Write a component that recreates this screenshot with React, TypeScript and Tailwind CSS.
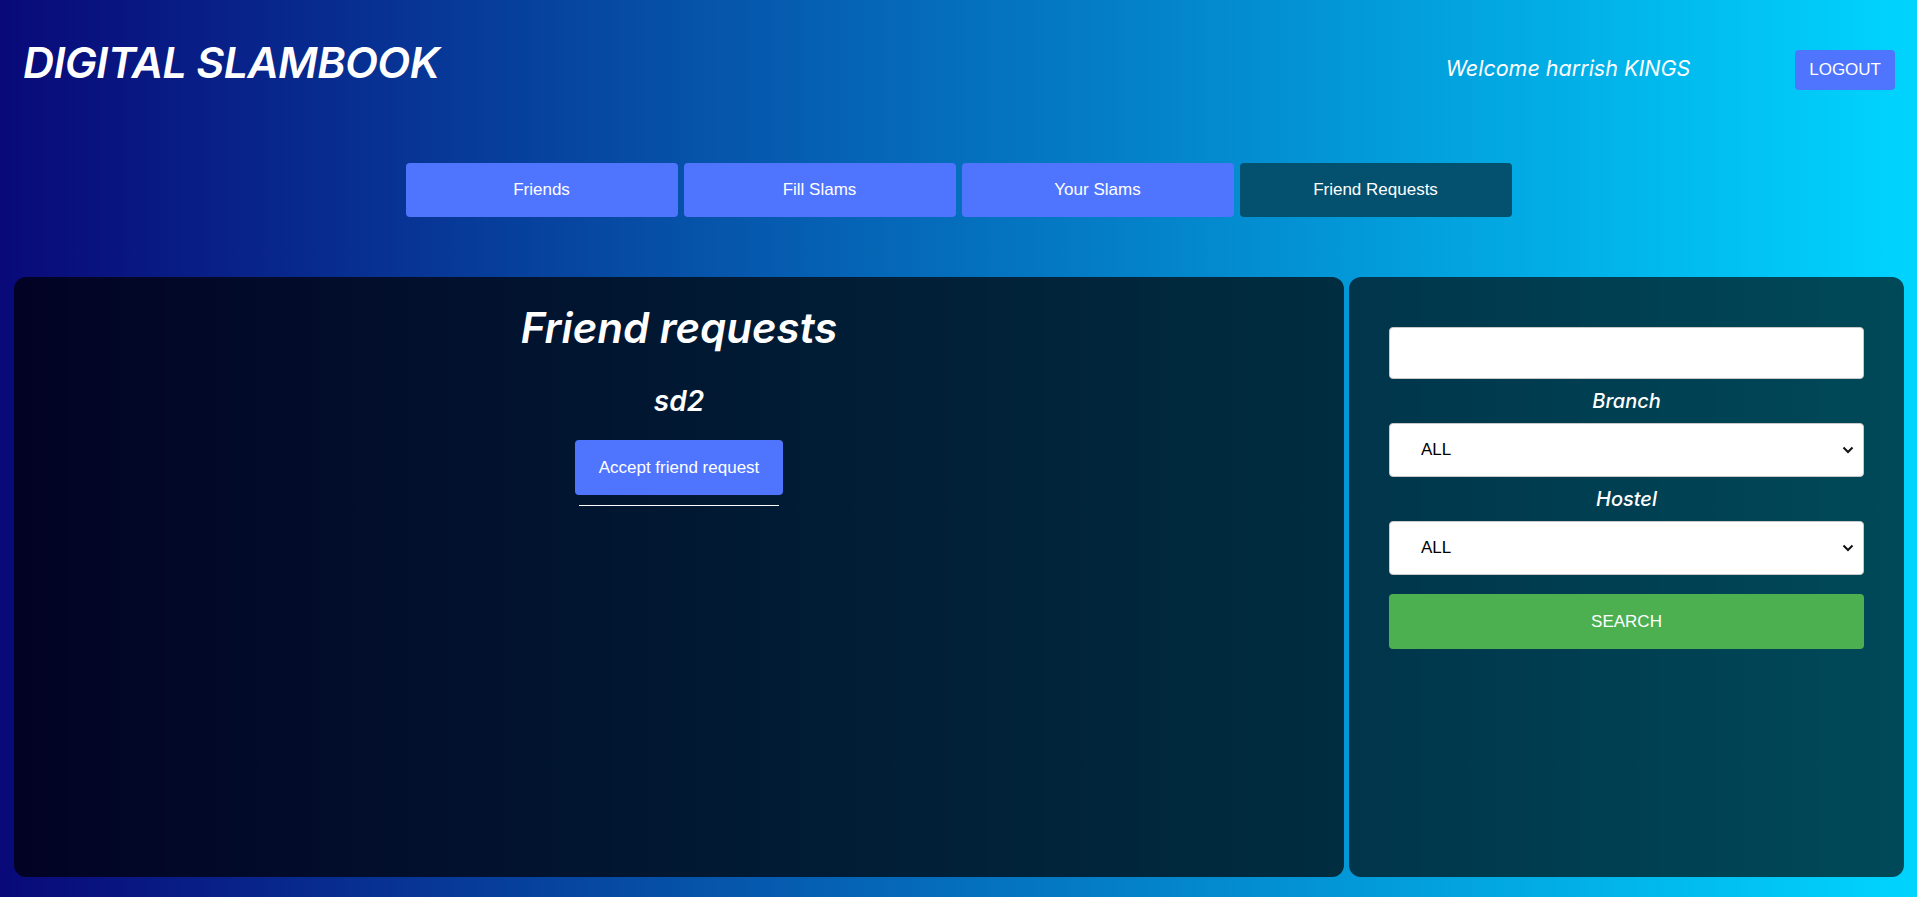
import React from "react";

const mont = "font-['Inter','Open_Sans',sans-serif]";

function Chevron() {
  return (
    <svg width="12" height="8" viewBox="0 0 12 8" className="pointer-events-none absolute right-[10px] top-1/2 -translate-y-1/2">
      <path d="M1.5 1.5 L6 6 L10.5 1.5" fill="none" stroke="#111" strokeWidth="2" />
    </svg>
  );
}

function Select() {
  return (
    <div className="relative w-full">
      <select className="h-[54px] w-full appearance-none rounded-[4px] border border-[#c8c8c8] bg-white pl-[31px] text-[17px] text-black outline-none">
        <option>ALL</option>
      </select>
      <Chevron />
    </div>
  );
}

export default function App() {
  const tabs = ["Friends", "Fill Slams", "Your Slams", "Friend Requests"];
  return (
    <div className="min-h-[897px] w-full bg-[linear-gradient(90deg,#090979_0%,#00d4ff_100%)] font-['Liberation_Sans',Arial,sans-serif] text-white">
      <header className="flex h-[124px] items-center justify-between pl-[23px] pr-[22px]">
        <h1 className={`${mont} text-[43px] font-semibold italic leading-none tracking-[-0.6px] text-white`}>
          DIGITAL SLAMBOOK
        </h1>
        <div className="flex items-center">
          <span className={`${mont} mt-[12px] text-[21.5px] italic text-white`}>Welcome harrish KINGS</span>
          <button className="ml-[105px] mt-[15px] h-[40px] rounded-[4px] bg-[#4f75ff] px-[14px] text-[17px] text-white">
            LOGOUT
          </button>
        </div>
      </header>

      <nav className="mt-[39px] flex justify-center gap-[6px]">
        {tabs.map((t, i) => (
          <button
            key={t}
            className={`h-[54px] w-[272px] rounded-[4px] text-[17px] text-white ${
              i === 3 ? "bg-[#03506f]" : "bg-[#4f75ff]"
            }`}
          >
            {t}
          </button>
        ))}
      </nav>

      <main className="mt-[60px] flex h-[600px] gap-[5px] pl-[14px] pr-[13px]">
        <section className="flex w-[1330px] flex-col items-center rounded-[12px] bg-black/70 pt-[26px]">
          <h2 className={`${mont} text-[42px] font-semibold italic leading-[50px] text-white`}>Friend requests</h2>
          <h3 className={`${mont} mt-[31px] text-[28px] font-semibold italic leading-[34px] text-white`}>sd2</h3>
          <button className="mt-[22px] h-[55px] w-[208px] rounded-[4px] bg-[#4f75ff] text-[17px] text-white">
            Accept friend request
          </button>
          <div className="mt-[10px] h-px w-[200px] bg-white" />
        </section>

        <section className="flex flex-1 flex-col rounded-[12px] bg-black/65 px-[40px] pt-[50px]">
          <input className="h-[52px] w-full rounded-[4px] border border-[#c8c8c8] bg-white px-3 text-[17px] text-black outline-none" />
          <label className={`${mont} mt-[5px] pb-[5px] text-center text-[20px] font-medium italic leading-[34px] text-white`}>Branch</label>
          <Select />
          <label className={`${mont} mt-[5px] pb-[5px] text-center text-[20px] font-medium italic leading-[34px] text-white`}>Hostel</label>
          <Select />
          <button className="mt-[19px] h-[55px] w-full rounded-[4px] bg-[#4caf50] text-[17px] text-white">SEARCH</button>
        </section>
      </main>
    </div>
  );
}
